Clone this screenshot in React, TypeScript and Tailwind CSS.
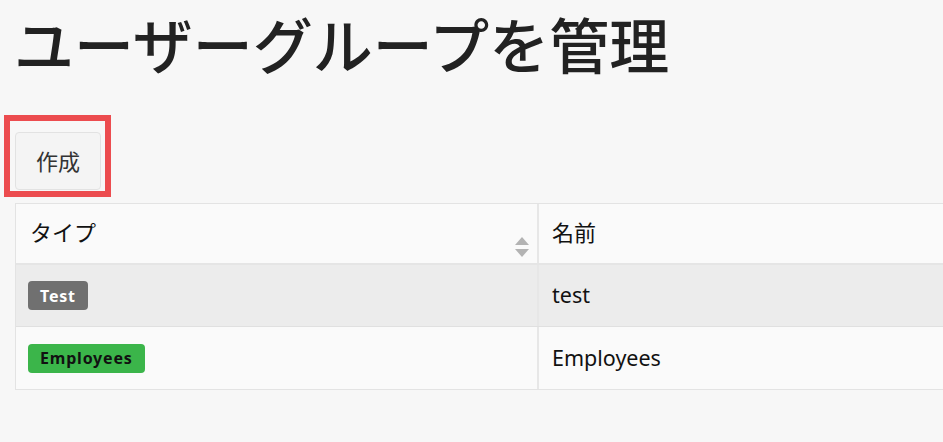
const font = { fontFamily: '"Noto Sans", "Noto Sans CJK JP", sans-serif' }

const SortIcon = () => (
  <svg width="16" height="22" viewBox="0 0 16 22" className="absolute right-[7px] top-[32px]">
    <path d="M8 1 L15 9 H1 Z" fill="#b3b3b3" />
    <path d="M8 21 L15 13 H1 Z" fill="#b3b3b3" />
  </svg>
)

const Badge = ({ label, className }: { label: string; className: string }) => (
  <span
    className={`inline-flex items-center h-[29px] px-[12px] rounded-[4px] text-[16px] font-bold tracking-[0.05em] ${className}`}
  >
    {label}
  </span>
)

const rows = [
  { type: "Test", badge: "bg-[#707070] text-white", name: "test", bg: "bg-[#ececec]" },
  { type: "Employees", badge: "bg-[#3bb54a] text-[#111]", name: "Employees", bg: "bg-[#fafafa]" },
]

export default function App() {
  return (
    <div className="min-h-screen bg-[#f7f7f7] overflow-hidden text-[#222]" style={font}>
      <h1 className="pl-[14px] pt-[8px] text-[60px] leading-[77px] font-medium text-[#222] whitespace-nowrap">
        ユーザーグループを管理
      </h1>
      <div className="mt-[30px] ml-[4px] w-[107px] h-[82px] border-[6px] border-[#ec4c4f] pt-[11px] pl-[5px]">
        <button className="w-[86px] h-[58px] rounded-[4px] border border-[#e2e2e2] bg-[#f4f4f4] text-[22px] text-[#333]">
          作成
        </button>
      </div>
      <div className="ml-[15px] mt-[6px] w-[1100px] border border-[#e3e3e3] bg-[#fafafa]">
        <div className="flex h-[61px] border-b-2 border-[#e5e5e5]">
          <div className="relative w-[523px] border-r-2 border-[#e7e7e7] pl-[14px] pt-[12px] text-[22px] text-[#111]">
            タイプ
            <SortIcon />
          </div>
          <div className="pl-[13px] pt-[12px] text-[22px] text-[#111]">名前</div>
        </div>
        {rows.map((r, i) => (
          <div
            key={r.name}
            className={`flex h-[62px] ${r.bg} ${i === 0 ? "border-b border-[#e0e0e0]" : ""}`}
          >
            <div className="w-[523px] border-r-2 border-[#e7e7e7] pl-[12px] flex items-center">
              <Badge label={r.type} className={r.badge} />
            </div>
            <div className="pl-[13px] flex items-center text-[21.5px] text-[#111]">{r.name}</div>
          </div>
        ))}
      </div>
    </div>
  )
}
